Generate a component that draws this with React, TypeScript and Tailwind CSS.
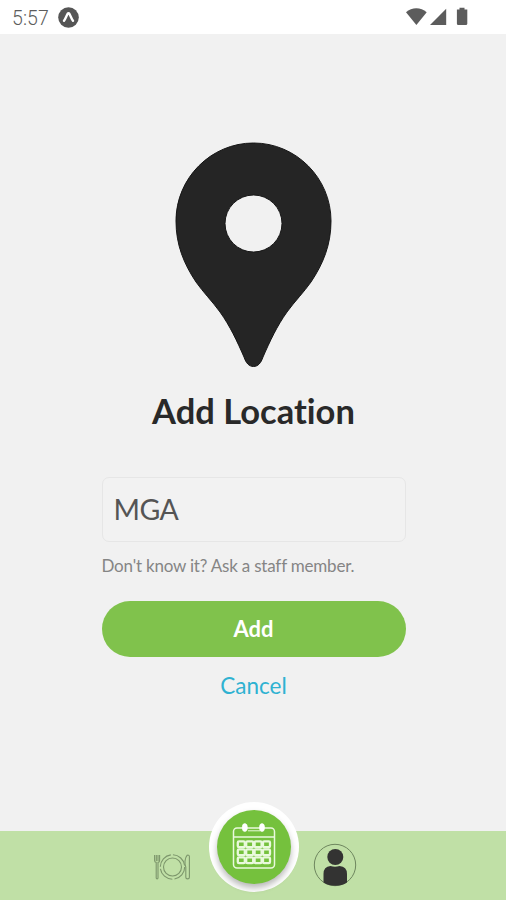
import { useState } from "react";

function StatusBar() {
  return (
    <header className="flex h-[34px] shrink-0 items-center bg-white pl-[12px] pr-[36px] text-[#5c5c5c]">
      <span className="mt-[3px] font-['Roboto',sans-serif] text-[19.5px] font-light leading-none tracking-[0.1px]">5:57</span>
      <svg className="ml-[9px]" width="21" height="21" viewBox="0 0 21 21">
        <circle cx="10.5" cy="10.5" r="10.3" fill="#555" />
        <path
          d="M6 13.8C7.5 11.8 8.4 8.8 9.6 6.8q.9-1.3 1.8 0c1.2 2 2.1 5 3.6 7"
          fill="none"
          stroke="#fff"
          strokeWidth="2.4"
          strokeLinecap="round"
          strokeLinejoin="round"
        />
      </svg>
      <svg className="ml-auto" width="64" height="20" viewBox="0 0 64 20" fill="#5c5c5c">
        <path d="M0 5.2C5.8-.1 14.8-.1 20.7 5.2L10.4 18z" />
        <path d="M40.2 1.8V18H24z" />
        <path d="M53.5.8h5v1.7h2.8v14.2q0 1.4-1.4 1.4h-7.6q-1.4 0-1.4-1.4V2.5h2.6z" />
      </svg>
    </header>
  );
}

function PinIcon() {
  return (
    <svg width="158" height="226" viewBox="0 0 158 226">
      <path
        d="M78.5 1C36 1 1 36 1 79c0 24 8 43 20 61 7 10 16 19 24 30 10 14 17 29 24 45 2 6 5 9.500 9.500 9.500s7.500-3.500 9.500-9.500c7-16 14-31 24-45 8-11 17-20 24-30 12-18 20-37 20-61C156 36 121 1 78.500 1zm0 52a28.500 28.500 0 1 1 0 57 28.500 28.500 0 0 1 0-57z"
        fill="#252525"
        fillRule="evenodd"
        stroke="#161616"
        strokeWidth="1"
      />
    </svg>
  );
}

function PlateIcon() {
  return (
    <svg width="38" height="28" viewBox="0 0 38 28" fill="none" stroke="#7c966b" strokeWidth="1.1">
      <circle cx="19.5" cy="14" r="12.2" strokeDasharray="17 2.2" />
      <circle cx="19.5" cy="14" r="9" />
      <path d="M1.6 2v5.4q0 1.6 1.6 2V25q0 .9.9.9t.9-.9V9.4q1.6-.4 1.6-2V2M3.3 2v6M5 2v6" />
      <path d="M34.2 2.2c-2.6 3-2.8 8.8-1.4 12v10q0 1.7 1.8 1.7t1.8-1.7V3.6q0-1.8-2.2-1.4z" />
    </svg>
  );
}

function CalendarIcon() {
  return (
    <svg width="44" height="48" viewBox="0 0 44 48" fill="none" stroke="#e9f9dc">
      <rect x="1.5" y="5" width="41" height="40" rx="3.5" strokeWidth="1.5" />
      <path d="M2 14h40" strokeWidth="1.5" />
      <path d="M16 7.8h12" strokeWidth="1" />
      <g fill="#fff" stroke="#fff" strokeWidth="0.6">
        <ellipse cx="12.8" cy="4.6" rx="2.6" ry="4" />
        <ellipse cx="30" cy="4.6" rx="2.6" ry="4" />
      </g>
      {[18.4, 26.4, 34.4].map((y) =>
        [5.8, 14.2, 22.6, 31].map((x) => (
          <rect key={`${x}-${y}`} x={x} y={y} width="7" height="5.8" rx="1.2" strokeWidth="2.3" />
        ))
      )}
    </svg>
  );
}

function ProfileIcon() {
  return (
    <svg width="44" height="44" viewBox="0 0 44 44">
      <circle cx="22" cy="22" r="20.7" fill="none" stroke="#6e865e" strokeWidth="1" />
      <circle cx="22.3" cy="14" r="8" fill="#333332" />
      <path d="M10.5 39.5V31q0-7.5 7-8q4.5 1.6 9 0q7.5.5 7.5 8v8.500q-5 3.300-11.700 3.300t-11.800-3.300z" fill="#333332" />
    </svg>
  );
}

export default function App() {
  const [code, setCode] = useState("MGA");

  return (
    <div className="flex h-[900px] w-[506px] flex-col overflow-hidden bg-[#f1f1f1] font-['Lato',sans-serif] [font-variant-ligatures:none]">
      <StatusBar />

      <main className="flex flex-1 flex-col items-center pl-px pt-[108px]">
        <PinIcon />
        <h1 className="mt-[21px] text-[34.5px] font-bold leading-[44px] text-[#292929]">Add Location</h1>

        <form className="mt-[44px] flex w-[304px] flex-col" onSubmit={(e) => e.preventDefault()}>
          <input
            className="h-[65px] w-full rounded-[7px] border border-[#e6e6e6] bg-[#f2f2f2] px-[11px] pb-px text-[28.5px] tracking-[-0.5px] text-[#555] outline-none"
            value={code}
            onChange={(e) => setCode(e.target.value)}
          />
          <p className="mt-[12px] whitespace-nowrap text-[17px] leading-[24px] tracking-[-0.2px] text-[#858585]">
            Don't know it? Ask a staff member.
          </p>
          <button className="mt-[23px] h-[56px] rounded-full bg-[#80c24c] pb-px text-[22px] font-bold text-white">
            Add
          </button>
          <button type="button" className="mt-[14px] self-center text-[22.5px] leading-[30px] text-[#2fb2d1]">
            Cancel
          </button>
        </form>
      </main>

      <nav className="flex h-[69px] shrink-0 items-start bg-[#c0e0a6] pl-[153px]">
        <button className="mt-[22px]">
          <PlateIcon />
        </button>
        {/* Raised centre tab */}
        <button className="-mt-[29px] ml-[17.500px] flex size-[90px] shrink-0 items-center justify-center rounded-full bg-white">
          <span className="flex size-[74px] items-center justify-center rounded-full bg-[#75c13d] shadow-[0_4px_6px_rgba(0,0,0,0.28)]">
            <CalendarIcon />
          </span>
        </button>
        <button className="ml-[14px] mt-[12px]">
          <ProfileIcon />
        </button>
      </nav>
    </div>
  );
}
